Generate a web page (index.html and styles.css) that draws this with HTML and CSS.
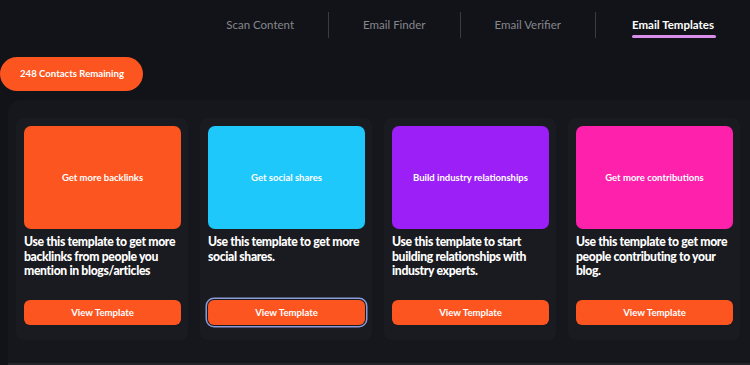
FILE: index.html
```html
<!DOCTYPE html>
<html lang="en">
<head>
    <meta charset="UTF-8">
    <meta name="viewport" content="width=device-width, initial-scale=1.0">
    <title>Email Templates</title>
    <link rel="stylesheet" href="styles.css">
</head>
<body>
    <nav class="tabs">
        <a class="tab">Scan Content</a>
        <a class="tab">Email Finder</a>
        <a class="tab">Email Verifier</a>
        <a class="tab active">Email Templates</a>
    </nav>

    <div class="credits">
        <span class="pill">248 Contacts Remaining</span>
    </div>

    <div class="panel">
        <div class="card">
            <div class="cover orange">Get more backlinks</div>
            <p class="desc">Use this template to get more backlinks from people you mention in blogs/articles</p>
            <button class="view-btn">View Template</button>
        </div>
        <div class="card">
            <div class="cover cyan">Get social shares</div>
            <p class="desc">Use this template to get more social shares.</p>
            <button class="view-btn focused">View Template</button>
        </div>
        <div class="card">
            <div class="cover purple">Build industry relationships</div>
            <p class="desc">Use this template to start building relationships with industry experts.</p>
            <button class="view-btn">View Template</button>
        </div>
        <div class="card">
            <div class="cover pink">Get more contributions</div>
            <p class="desc">Use this template to get more people contributing to your blog.</p>
            <button class="view-btn">View Template</button>
        </div>
    </div>
</body>
</html>
```

FILE: styles.css
```css
body {
    font-family: 'Lato', 'Noto Sans', sans-serif;
    margin: 0;
    background-color: #121318;
    color: #ffffff;
    height: 365px;
    overflow: hidden;
}
.tabs {
    display: flex;
    justify-content: flex-end;
    align-items: center;
    height: 50px;
}
.tab {
    position: relative;
    padding: 0 34px;
    font-size: 11.5px;
    color: #85878d;
    line-height: 26px;
    border-left: 1px solid #3a3c42;
}
.tab:first-child {
    border-left: none;
}
.tab.active {
    color: #ffffff;
    font-weight: bold;
    padding: 0 36px 0 36px;
    font-size: 11.5px;
}
.tab.active::after {
    content: "";
    position: absolute;
    left: 36px;
    right: 34px;
    bottom: 0;
    height: 3px;
    border-radius: 2px;
    background-color: #d98ee9;
}
.credits {
    padding-top: 7px;
    height: 43px;
}
.pill {
    display: inline-block;
    height: 34px;
    line-height: 34px;
    padding: 0 19px 0 20px;
    border-radius: 17px;
    background-color: #fd5520;
    font-size: 9.6px;
    font-weight: bold;
}
.panel {
    display: grid;
    grid-template-columns: repeat(4, 172px);
    gap: 12px;
    margin-left: 8px;
    padding: 18px 0 0 8px;
    height: 245px;
    background-color: #16171c;
    border-top-left-radius: 14px;
    border-bottom: 2px solid #24252a;
}
.card {
    display: flex;
    flex-direction: column;
    height: 222px;
    padding: 8px 7px 0 8px;
    box-sizing: border-box;
    background-color: #1a1b20;
    border-radius: 8px;
}
.cover {
    display: flex;
    justify-content: center;
    align-items: center;
    height: 103px;
    border-radius: 7px;
    font-size: 9.5px;
    font-weight: bold;
}
.orange { background-color: #fd5520; }
.cyan { background-color: #1fc8fb; }
.purple { background-color: #9d1ff8; }
.pink { background-color: #fd21ab; }
.desc {
    margin: 6px 0 0;
    height: 65px;
    font-size: 12.2px;
    line-height: 14.5px;
    font-weight: 900;
    letter-spacing: -0.35px;
}
.view-btn {
    height: 25px;
    border: none;
    border-radius: 6px;
    background-color: #fd5520;
    color: #ffffff;
    font-family: inherit;
    font-size: 9.6px;
    font-weight: bold;
    cursor: pointer;
}
.view-btn.focused {
    box-shadow: 0 0 0 1px #1a1b20, 0 0 0 2.5px #8a9bd8;
}
```
